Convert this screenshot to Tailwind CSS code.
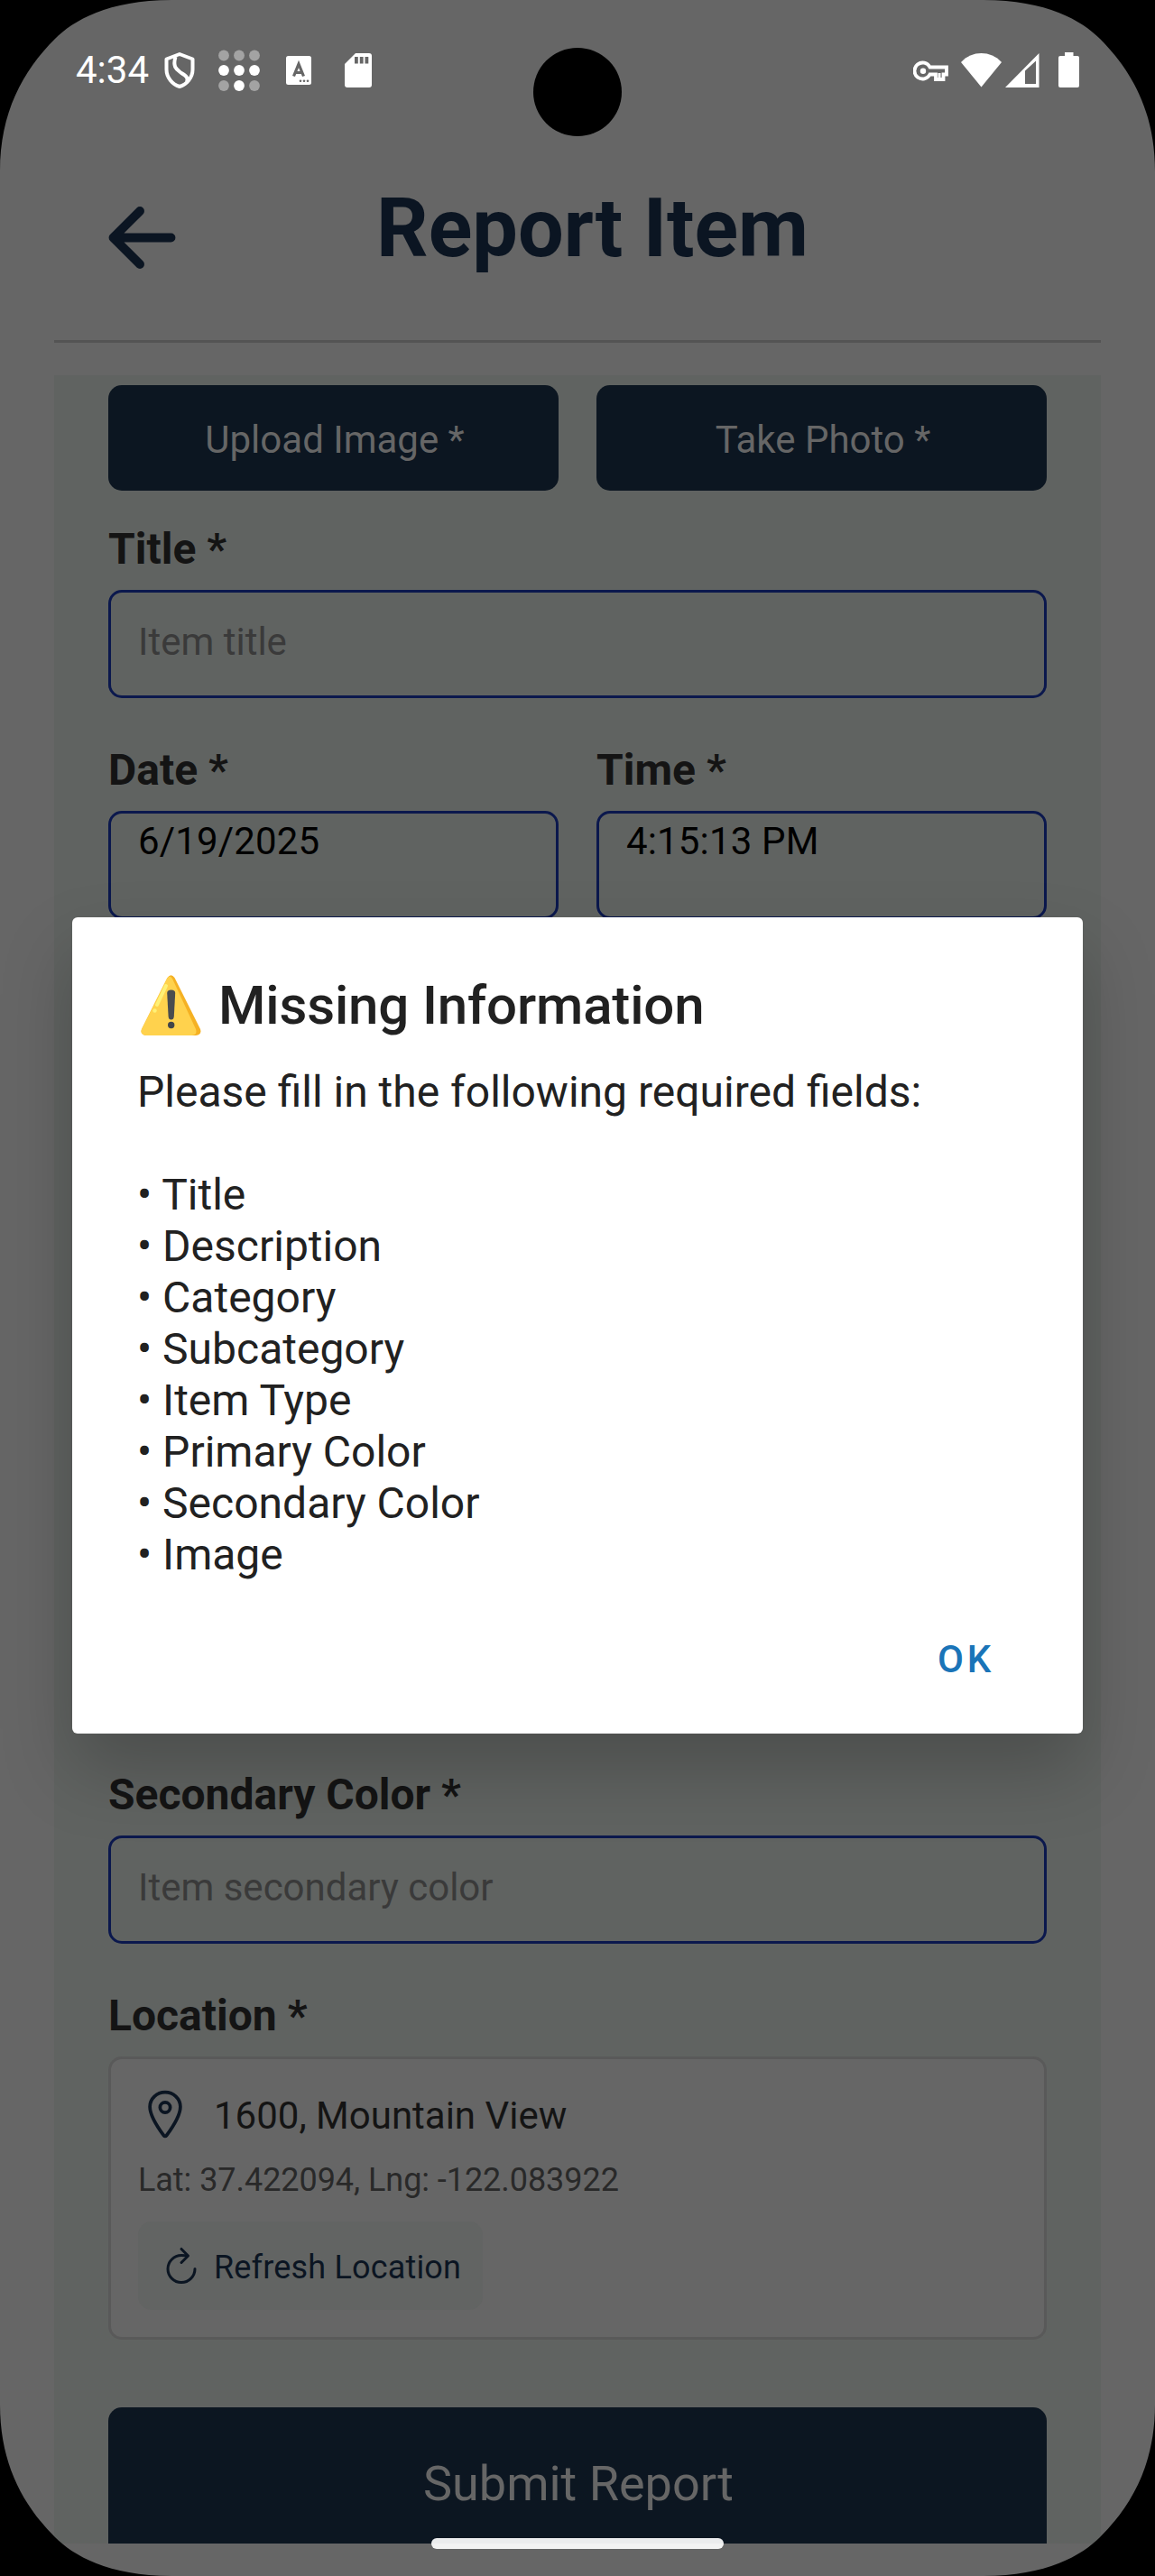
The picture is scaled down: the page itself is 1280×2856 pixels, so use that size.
<!DOCTYPE html>
<html lang="en">
<head>
<meta charset="utf-8">
<title>Report Item</title>
<script src="https://cdn.jsdelivr.net/npm/@tailwindcss/browser@4"></script>
</head>
<body class="bg-black">
<div class="relative w-[1280px] h-[2856px] overflow-hidden bg-[#666666] font-['Roboto',sans-serif] text-[42px] leading-[49px] text-[#141414]">

  <!-- Status bar -->
  <div class="flex h-[102px] pt-[53px] pl-[84px] pr-[84px] justify-between text-white">
    <div class="flex">
      <span class="w-[98px]">4:34</span>
      <svg class="w-[34px] h-[49px]" viewBox="182 53 34 49" fill="none" stroke="#fff" stroke-width="4" stroke-linejoin="round"><path d="M199 60 L213.500 65.500 V77 C213.500 86 207 93.500 199 96 C191 93.500 184.500 86 184.500 77 V65.500 Z"/><path d="M194.500 63 C191 75 196 77 201 81 C206 84 209 86 207 91"/></svg>
      <svg class="ml-[26px] w-[46px] h-[49px]" viewBox="242 53 46 49"><g fill="#a3a3a3"><circle cx="248" cy="61.500" r="5.900"/><circle cx="265" cy="61.500" r="5.900"/><circle cx="282" cy="61.500" r="5.900"/><circle cx="248" cy="95" r="5.900"/><circle cx="282" cy="95" r="5.900"/></g><g fill="#fff"><circle cx="248" cy="78" r="5.900"/><circle cx="265" cy="78" r="5.900"/><circle cx="282" cy="78" r="5.900"/><circle cx="265" cy="95" r="5.900"/></g></svg>
      <svg class="ml-[29px] w-[28px] h-[49px]" viewBox="317 53 28 49"><rect x="317" y="62" width="28" height="32" rx="2.500" fill="#fff"/><path d="M325.500 84.500 L331 71 L336.500 84.500 M327.500 80.500 H334.500" fill="none" stroke="#666" stroke-width="3.200"/><g fill="#666"><circle cx="333" cy="89.700" r="1.300"/><circle cx="337" cy="89.700" r="1.300"/><circle cx="341" cy="89.700" r="1.300"/></g></svg>
      <svg class="ml-[37px] w-[30px] h-[49px]" viewBox="382 53 30 49"><path d="M394 59 H409 a3 3 0 0 1 3 3 V94 a3 3 0 0 1-3 3 H385 a3 3 0 0 1-3-3 V71 Z" fill="#fff"/><path d="M393 63h3.800v7.500H393zM398.800 63h3.800v7.500h-3.800zM404.500 63h3.800v7.500h-3.800z" fill="#666"/></svg>
    </div>
    <div class="flex">
      <svg class="w-[184px] h-[49px]" viewBox="1012 53 184 49">
        <path d="M1030.500 74.500 H1049 V82.500 H1045.500 V88 H1037 V82.500 H1030.500 A9 9 0 1 1 1030.500 74.500 Z" fill="none" stroke="#fff" stroke-width="3.800"/><circle cx="1023" cy="78.700" r="3.200" fill="#fff"/><path d="M1041 81V86.500" stroke="#fff" stroke-width="3"/>
        <path d="M1065 69 C1077 55.700 1098 55.700 1110 69 L1087.500 96.500 Z" fill="#fff"/>
        <path d="M1114 97 L1151.500 59 V97 Z M1136 78.500 V93 H1148 V67.500 Z" fill="#fff" fill-rule="evenodd"/>
        <path d="M1180 58 H1189.500 V62 H1194 a2 2 0 0 1 2 2 V95 a2 2 0 0 1-2 2 H1175 a2 2 0 0 1-2-2 V64 a2 2 0 0 1 2-2 H1180 Z" fill="#fff"/>
      </svg>
    </div>
  </div>

  <!-- Header -->
  <header class="flex mx-[60px] h-[278px] pl-[45px] pt-[99px] border-b-[3px] border-[#545454] text-[#0b1522]">
    <svg class="mt-[10px] w-[105px] h-[105px]" viewBox="0 0 512 512" fill="none" stroke="currentColor" stroke-width="48" stroke-linecap="round" stroke-linejoin="round"><path d="M244 400 100 256l144-144M120 256h292"/></svg>
    <h1 class="ml-[207px] text-[90px] leading-[105px] font-bold whitespace-nowrap">Report Item</h1>
  </header>

  <!-- Form -->
  <main class="mt-[36px] mx-[60px] h-[2404px] px-[60px] pt-[11px] overflow-hidden bg-[#606361]">
    <div class="flex justify-between text-[#666666] text-center">
      <div class="w-[499px] h-[117px] pl-[3px] pt-[36px] rounded-[15px] bg-[#0c1621]">Upload Image *</div>
      <div class="w-[499px] h-[117px] pl-[3px] pt-[36px] rounded-[15px] bg-[#0c1621]">Take Photo *</div>
    </div>

    <div class="mt-[36px] text-[48px] leading-[57px] font-bold">Title *</div>
    <div class="mt-[17px] h-[120px] pl-[30px] pt-[30px] border-[3px] border-[#0b184d] rounded-[15px] text-[#3a3a3a]">Item title</div>

    <div class="mt-[51px] flex justify-between">
      <div class="w-[499px]">
        <div class="text-[48px] leading-[57px] font-bold">Date *</div>
        <div class="mt-[17px] h-[120px] pl-[30px] pt-[6px] border-[3px] border-[#0b184d] rounded-[15px] text-black tracking-[0.15px]">6/19/2025</div>
      </div>
      <div class="w-[499px]">
        <div class="text-[48px] leading-[57px] font-bold">Time *</div>
        <div class="mt-[17px] h-[120px] pl-[30px] pt-[6px] border-[3px] border-[#0b184d] rounded-[15px] text-black tracking-[0.15px]">4:15:13 PM</div>
      </div>
    </div>

    <div class="mt-[942px] text-[48px] leading-[57px] font-bold">Secondary Color *</div>
    <div class="mt-[17px] h-[120px] pl-[30px] pt-[30px] border-[3px] border-[#0b184d] rounded-[15px] text-[#3a3a3a]">Item secondary color</div>

    <div class="mt-[51px] text-[48px] leading-[57px] font-bold">Location *</div>
    <div class="mt-[17px] h-[314px] p-[30px] border-[3px] border-[#595959] rounded-[15px] bg-[#666666]">
      <div class="flex h-[60px] gap-[24px]">
        <svg class="mt-px w-[60px] h-[60px] text-[#0b1522]" viewBox="0 0 512 512" fill="none" stroke="currentColor" stroke-width="32" stroke-linecap="round" stroke-linejoin="round"><path d="M256 48c-79.500 0-144 61.390-144 137 0 87 96 224.870 131.250 272.490a15.770 15.770 0 0025.500 0C304 409.890 400 272.070 400 185c0-75.610-64.500-137-144-137z"/><circle cx="256" cy="192" r="48"/></svg>
        <span class="pt-[8px]">1600, Mountain View</span>
      </div>
      <div class="mt-[23px] text-[36px] leading-[42px] tracking-[-0.05px] text-[#292929]">Lat: 37.422094, Lng: -122.083922</div>
      <div class="mt-[25px] inline-flex h-[98px] px-[24px] gap-[12px] rounded-[15px] bg-[#626463] text-[36px] leading-[42px] tracking-[0.17px] text-[#0b1522]">
        <svg class="mt-[25px] w-[48px] h-[48px]" viewBox="0 0 512 512" fill="none" stroke="currentColor" stroke-width="32" stroke-linecap="round"><path d="M320 146s24.360-12-64-12a160 160 0 10160 160"/><path d="M256 58l80 80-80 80" stroke-linejoin="round"/></svg>
        <span class="pt-[30px]">Refresh Location</span>
      </div>
    </div>

    <div class="mt-[75px] h-[180px] pl-[2px] pt-[53px] rounded-[15px] bg-[#0c1621] text-[#666666] text-center text-[54px] leading-[63px]">Submit Report</div>
  </main>

  <!-- Alert dialog -->
  <div class="absolute left-[80px] top-[1017px] w-[1120px] h-[905px] px-[72px] pt-[62px] rounded-[6px] bg-white text-[#212121] shadow-[0_40px_80px_rgba(0,0,0,0.21)]">
    <div class="flex">
      <svg class="ml-[4px] mt-[2px] w-[67px] h-[67px]" viewBox="0 0 67 67">
        <path d="M29.500 3 Q33.500-2.500 37.500 3 L66 60 Q68 66.500 61 67 H6 Q-1 66.500 1 60 Z" fill="#f5b123"/>
        <path d="M29 4 Q32-1 35 4 L61 60 Q63 66.500 56.500 67 H6 Q-1 66.500 1 60 Z" fill="#ffd24d"/>
        <path d="M28 12 L18 33" stroke="#fff176" stroke-width="4" stroke-linecap="round"/><circle cx="15.500" cy="39.500" r="2.200" fill="#fff176"/>
        <path d="M29.200 20 Q29.200 16.500 33.700 16.500 Q38.200 16.500 38.200 20 L36.800 46 Q36.500 49.500 33.700 49.500 Q30.900 49.500 30.600 46 Z" fill="#4a4c4f"/><circle cx="33.700" cy="55.500" r="3.700" fill="#424549"/>
      </svg>
      <h2 class="ml-[19px] text-[60px] leading-[71px] font-medium tracking-[-0.15px] whitespace-nowrap">Missing Information</h2>
    </div>
    <div class="mt-[32px] text-[48px] leading-[57px] whitespace-nowrap">
      <p>Please fill in the following required fields:</p>
      <ul class="mt-[57px]">
        <li>• Title</li>
        <li>• Description</li>
        <li>• Category</li>
        <li>• Subcategory</li>
        <li>• Item Type</li>
        <li>• Primary Color</li>
        <li>• Secondary Color</li>
        <li>• Image</li>
      </ul>
    </div>
    <div class="mt-[63px] mr-[26px] flex justify-end font-medium tracking-[3.750px] text-[#1a74b8]">OK</div>
  </div>

  <!-- Camera cutout, gesture bar and display corners -->
  <div class="absolute left-[591px] top-[53px] size-[98px] rounded-full bg-black"></div>
  <div class="absolute left-[478px] top-[2814px] w-[324px] h-[12px] rounded-full bg-white/92"></div>
  <svg class="absolute left-0 top-0 w-[1280px] h-[2856px]" viewBox="0 0 1280 2856">
    <defs><path id="corner" d="M0 0 V190 C0 125 25 79 61 43 C81 23 120 0 190 0 Z"/></defs>
    <use href="#corner"/>
    <use href="#corner" transform="translate(1280 0) scale(-1 1)"/>
    <use href="#corner" transform="translate(0 2856) scale(1 -1)"/>
    <use href="#corner" transform="translate(1280 2856) scale(-1 -1)"/>
  </svg>
</div>
</body>
</html>
